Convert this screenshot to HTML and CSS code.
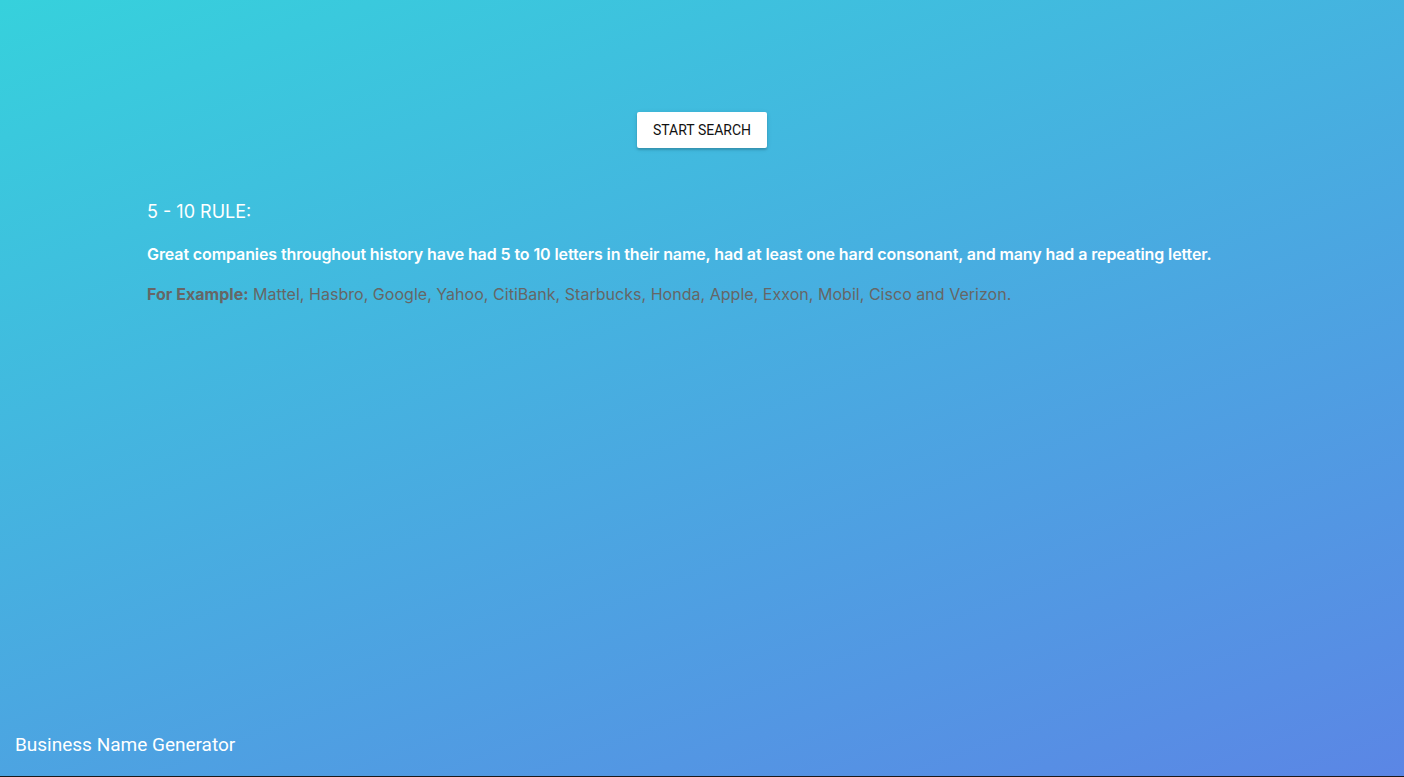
FILE: index.html
```html
<!DOCTYPE html>
<html>
<head>
<meta charset="utf-8">
<link rel="stylesheet" href="styles.css">
</head>
<body>
<div class="page">
  <main class="main">
    <div class="actions">
      <button class="btn">Start Search</button>
    </div>
    <section class="rule">
      <h2 class="rule-title">5 - 10 RULE:</h2>
      <p class="rule-text">Great companies throughout history have had 5 to 10 letters in their name, had at least one hard consonant, and many had a repeating letter.</p>
      <p class="rule-example"><strong>For Example:</strong> Mattel, Hasbro, Google, Yahoo, CitiBank, Starbucks, Honda, Apple, Exxon, Mobil, Cisco and Verizon.</p>
    </section>
  </main>
  <footer class="footer">Business Name Generator</footer>
</div>
</body>
</html>
```
FILE: styles.css
```css
html, body {
  margin: 0;
  padding: 0;
  height: 100%;
}
body {
  background: #1a1a1a;
  font-family: "Liberation Sans", Arial, sans-serif;
}
.page {
  height: 776px;
  background: linear-gradient(160deg, #36d1dc 0%, #5b86e5 100%);
  display: flex;
  flex-direction: column;
  box-sizing: border-box;
}
.main {
  flex: 1;
  padding: 112px 147px 0;
}
.actions {
  display: flex;
  justify-content: center;
}
.btn {
  width: 130px;
  height: 36px;
  background: #fff;
  border: none;
  border-radius: 2px;
  box-shadow: 0 2px 2px rgba(0,0,0,0.14), 0 1px 5px rgba(0,0,0,0.12);
  font-family: Roboto, sans-serif;
  font-size: 14px;
  text-transform: uppercase;
  color: #111;
  padding: 0;
  cursor: pointer;
}
.rule {
  margin-top: 52px;
}
.rule-title {
  margin: 0;
  font-family: Inter, sans-serif;
  font-weight: 400;
  font-size: 18px;
  color: #fff;
  line-height: 24px;
}
.rule-text {
  margin: 19px 0 0;
  font-family: Inter, sans-serif;
  font-weight: 600;
  font-size: 16px;
  letter-spacing: -0.1px;
  color: #fff;
  line-height: 22px;
}
.rule-example {
  margin: 18px 0 0;
  font-family: Inter, sans-serif;
  font-size: 16px;
  letter-spacing: 0.03px;
  color: #666;
  line-height: 22px;
}
.rule-example strong {
  font-weight: 700;
}
.footer {
  padding: 0 15px 20px;
  font-family: Roboto, sans-serif;
  font-size: 19px;
  color: #fff;
  line-height: 22px;
}
```
